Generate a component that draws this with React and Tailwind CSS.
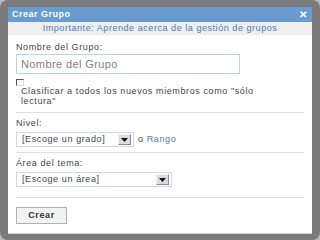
const font = { fontFamily: "'Liberation Sans', Arial, sans-serif" };

const SelectBox = ({ label, width }) => (
  <div
    className={`flex items-center h-[15px] border border-[#c4daef] bg-white pl-[5px] pr-[2px] ${width}`}
  >
    <span className="flex-1 text-[9px] leading-none tracking-[0.6px] text-[#444]">
      {label}
    </span>
    <span className="flex items-center justify-center w-[13px] h-[11px] bg-[#dcdcdc] border border-t-[#f4f4f4] border-l-[#f4f4f4] border-r-[#8a8a8a] border-b-[#8a8a8a]">
      <svg width="7" height="4" viewBox="0 0 7 4">
        <path d="M0 0h7L3.5 4z" fill="#111" />
      </svg>
    </span>
  </div>
);

const Divider = ({ className }) => (
  <div className={`h-px bg-[#dedede] ${className}`} />
);

export default function App() {
  return (
    <div className="w-[320px] h-[240px] bg-[#b9b9b9]" style={font}>
      <div className="h-full rounded-[8px] bg-[#7b7b7b] pt-[7px] pb-[6px] px-[8px]">
        <div className="h-full bg-white border-b border-[#cfcfcf] flex flex-col">
          <div className="h-[15px] bg-[#6a9bd0] flex items-center justify-between pl-[4px] pr-[5px]">
            <span className="text-[9px] font-bold tracking-[0.5px] text-white leading-none">
              Crear Grupo
            </span>
            <span className="text-[10px] font-bold text-white leading-none">
              ✕
            </span>
          </div>
          <div className="h-[13px] bg-[#eeeeee] flex items-center justify-center">
            <span className="text-[9px] tracking-[0.55px] text-[#4a7db3] leading-none">
              Importante: Aprende acerca de la gestión de grupos
            </span>
          </div>
          <div className="px-[8px] flex flex-col">
            <div className="mt-[7px] h-[12px] flex items-center text-[9px] tracking-[0.6px] text-[#444]">
              Nombre del Grupo:
            </div>
            <div className="w-[224px] h-[20px] border border-[#b8d3ee] flex items-center pl-[4px] text-[11px] tracking-[0.4px] text-[#808080]">
              Nombre del Grupo
            </div>
            <span className="mt-[5px] w-[8px] h-[7px] border-t border-l border-[#555] border-r border-b border-r-[#ddd] border-b-[#ddd]" />
            <p className="w-[262px] pl-[5px] text-[9px] leading-[10px] tracking-[0.6px] text-[#444]">
              Clasificar a todos los nuevos miembros como "sólo lectura"
            </p>
            <Divider className="mt-[6px]" />
            <div className="mt-[5px] h-[12px] flex items-center text-[9px] tracking-[0.6px] text-[#444]">
              Nivel:
            </div>
            <div className="mt-[2px] flex items-center gap-[4px]">
              <SelectBox label="[Escoge un grado]" width="w-[118px]" />
              <span className="text-[9px] tracking-[0.6px] text-[#444]">
                o <span className="text-[#4a7db3]">Rango</span>
              </span>
            </div>
            <Divider className="mt-[5px]" />
            <div className="mt-[5px] h-[12px] flex items-center text-[9px] tracking-[0.6px] text-[#444]">
              Área del tema:
            </div>
            <div className="mt-[2px]">
              <SelectBox label="[Escoge un área]" width="w-[156px]" />
            </div>
            <Divider className="mt-[10px]" />
            <button className="mt-[9px] w-[51px] h-[17px] bg-[#f2f2f2] border border-[#b0b0b0] text-[9px] font-bold tracking-[0.6px] text-[#333] leading-none">
              Crear
            </button>
          </div>
        </div>
      </div>
    </div>
  );
}
